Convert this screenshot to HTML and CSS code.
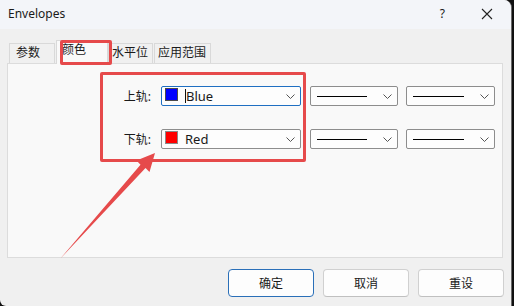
FILE: index.html
```html
<!DOCTYPE html>
<html lang="zh">
<head>
    <meta charset="UTF-8">
    <title>Envelopes</title>
    <link rel="stylesheet" href="styles.css">
</head>
<body>

<div class="window">
    <div class="titlebar">
        <span class="title">Envelopes</span>
        <span class="help">?</span>
        <svg class="close" width="12" height="12" viewBox="0 0 12 12">
            <path d="M1 1 L11 11 M11 1 L1 11" stroke="#222" stroke-width="1.1" fill="none"/>
        </svg>
    </div>

    <div class="tabs">
        <div class="tab">参数</div>
        <div class="tab active">颜色</div>
        <div class="tab">水平位</div>
        <div class="tab">应用范围</div>
    </div>

    <div class="panel">
        <div class="grid">
            <label class="label">上轨:</label>
            <div class="combo focused">
                <span class="swatch blue"></span>
                <span class="caret"></span>
                <span class="name">Blue</span>
                <svg class="chev" width="9" height="5" viewBox="0 0 9 5"><path d="M0.5 0.5 L4.5 4.5 L8.5 0.5" stroke="#555" fill="none"/></svg>
            </div>
            <div class="combo line">
                <span class="stroke"></span>
                <svg class="chev" width="9" height="5" viewBox="0 0 9 5"><path d="M0.5 0.5 L4.5 4.5 L8.5 0.5" stroke="#555" fill="none"/></svg>
            </div>
            <div class="combo line">
                <span class="stroke"></span>
                <svg class="chev" width="9" height="5" viewBox="0 0 9 5"><path d="M0.5 0.5 L4.5 4.5 L8.5 0.5" stroke="#555" fill="none"/></svg>
            </div>

            <label class="label">下轨:</label>
            <div class="combo">
                <span class="swatch red"></span>
                <span class="name">Red</span>
                <svg class="chev" width="9" height="5" viewBox="0 0 9 5"><path d="M0.5 0.5 L4.5 4.5 L8.5 0.5" stroke="#555" fill="none"/></svg>
            </div>
            <div class="combo line">
                <span class="stroke"></span>
                <svg class="chev" width="9" height="5" viewBox="0 0 9 5"><path d="M0.5 0.5 L4.5 4.5 L8.5 0.5" stroke="#555" fill="none"/></svg>
            </div>
            <div class="combo line">
                <span class="stroke"></span>
                <svg class="chev" width="9" height="5" viewBox="0 0 9 5"><path d="M0.5 0.5 L4.5 4.5 L8.5 0.5" stroke="#555" fill="none"/></svg>
            </div>
        </div>
    </div>

    <div class="buttons">
        <button class="btn default">确定</button>
        <button class="btn">取消</button>
        <button class="btn">重设</button>
    </div>

    <!-- annotation marks drawn over the dialog -->
    <div class="mark mark-tab"></div>
    <div class="mark mark-rows"></div>
    <svg class="arrow" width="514" height="306" viewBox="0 0 514 306">
        <polygon points="60,259 140.5,164.8 136.5,160.5 155,153 149.5,172 145.5,168" fill="#e64a4b"/>
    </svg>
</div>

</body>
</html>
```

FILE: styles.css
```css
html {
    background: #101010;
}

body {
    margin: 0;
    font-family: "Noto Sans", "Noto Sans CJK SC", sans-serif;
    font-size: 12px;
    color: #1a1a1a;
}

.window {
    position: relative;
    width: 511px;
    height: 306px;
    background: #f0f0f0;
    border-right: 1px solid #6a6a6a;
    border-radius: 0 8px 0 6px;
    overflow: hidden;
}

.titlebar {
    height: 29px;
    background: #f3f5f9;
    display: flex;
    align-items: center;
    padding-left: 8px;
}

.title {
    flex: 1;
    font-size: 12px;
    margin-top: -2px;
}

.help {
    font-size: 12px;
    margin-right: 36px;
    margin-top: -2px;
}

.close {
    margin-right: 18px;
    margin-top: -2px;
}

.tabs {
    display: flex;
    align-items: flex-end;
    padding-left: 9px;
    margin-top: 10px;
    height: 24px;
}

.tab {
    height: 20px;
    line-height: 18px;
    padding: 0 4px 0 3px;
    border: 1px solid #d9d9d9;
    border-bottom: none;
    background: #f0f0f0;
    box-sizing: border-box;
    margin-right: 1px;
}

.tab:first-child {
    width: 46px;
    padding-left: 6px;
}

.tab.active {
    height: 24px;
    width: 52px;
    background: #f9f9f9;
    line-height: 17px;
    padding-left: 5px;
    margin-right: 0;
    position: relative;
    z-index: 1;
    margin-bottom: -1px;
}

.panel {
    margin-left: 7px;
    width: 496px;
    height: 195px;
    box-sizing: border-box;
    background: #f9f9f9;
    border: 1px solid #dcdcdc;
    padding: 22px 0 0 108px;
}

.grid {
    display: grid;
    grid-template-columns: 36px 140px 88px 88px;
    grid-template-rows: 20px 20px;
    column-gap: 9px;
    row-gap: 23px;
    align-items: center;
}

.label {
    text-align: right;
    padding-right: 1px;
}

.combo {
    height: 20px;
    box-sizing: border-box;
    border: 1px solid #8d8d8d;
    border-radius: 2px;
    background: #fdfdfd;
    display: flex;
    align-items: center;
    padding-left: 3px;
    position: relative;
}

.combo.focused {
    border-color: #1f6fc2;
}

.combo.line + .combo.line {
    margin-left: -1px;
}

.swatch {
    width: 11px;
    height: 11px;
    border: 1px solid #4a4a4a;
    margin-top: -3px;
}

.swatch.blue {
    background: #0000ff;
}

.swatch.red {
    background: #ff0000;
    border-color: #8a8a8a;
}

.caret {
    width: 1px;
    height: 14px;
    background: #111;
    margin-left: 7px;
}

.name {
    margin-left: 7px;
    font-size: 13px;
    flex: 1;
}

.caret + .name {
    margin-left: 0;
}

.chev {
    margin-right: 5px;
}

.stroke {
    flex: 1;
    height: 1px;
    background: #000;
    margin: 0 16px 0 3px;
}

.buttons {
    display: flex;
    justify-content: flex-end;
    gap: 9px;
    padding-right: 7px;
    margin-top: 11px;
}

.btn {
    width: 86px;
    height: 28px;
    font-family: "Noto Sans", "Noto Sans CJK SC", sans-serif;
    font-size: 12px;
    color: #1a1a1a;
    background: #fdfdfd;
    border: 1px solid #d0d0d0;
    border-bottom-color: #c0c0c0;
    border-radius: 4px;
}

.btn.default {
    border: 1px solid #2a6fb8;
}

.mark {
    position: absolute;
    z-index: 2;
    border: 3px solid #e64a4b;
    border-radius: 2px;
    box-sizing: border-box;
}

.mark-tab {
    left: 60px;
    top: 40px;
    width: 52px;
    height: 25px;
}

.mark-rows {
    left: 100px;
    top: 72px;
    width: 206px;
    height: 90px;
}

.arrow {
    position: absolute;
    z-index: 2;
    left: 0;
    top: 0;
}
```
